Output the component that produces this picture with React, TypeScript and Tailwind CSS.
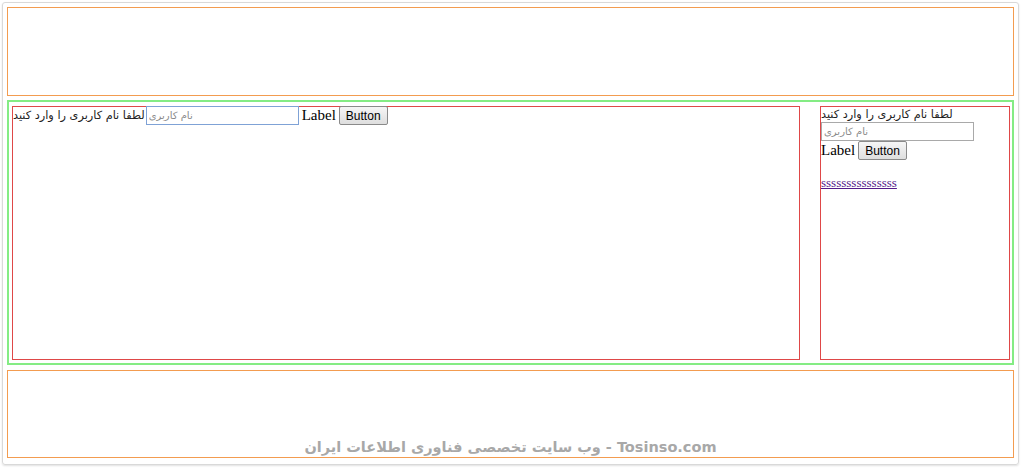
const persian = 'لطفا نام کاربری را وارد کنید';

function WinButton() {
  return (
    <button className="h-[19px] rounded-[2px] border border-[#8a8a8a] bg-gradient-to-b from-[#f6f6f6] to-[#dedede] px-[6px] font-['Liberation_Sans',sans-serif] text-[12px] leading-none text-black">
      Button
    </button>
  );
}

function UserInput({ focused }: { focused?: boolean }) {
  return (
    <input
      placeholder="نام کاربری"
      dir="rtl"
      className={`block h-[19px] w-[153px] border bg-white px-[2px] text-left font-['DejaVu_Sans',sans-serif] text-[10px] text-black placeholder:text-[#8a8a8a] outline-none ${
        focused ? 'border-[#7fa2d6]' : 'border-[#a9a9a9]'
      }`}
    />
  );
}

export default function App() {
  return (
    <div className="h-[468px] w-[1024px] overflow-hidden bg-white p-[2px] font-['Liberation_Serif',serif]">
      <div className="flex h-[463px] w-[1017px] flex-col rounded-[3px] border border-[#d9d9d9] px-[4px] pt-[4px] shadow-[0_1px_2px_rgba(0,0,0,0.12)]">
        <div className="h-[89px] border border-[#f39c50]" />

        <div className="mt-[4px] flex h-[265px] gap-[20px] border-2 border-[#84ec84] pl-[3px] pr-[2px] pt-[4px]">
          <div className="h-[254px] w-[788px] border border-[#df4848]">
            <div className="-mt-px flex h-[19px] items-center">
              <span className="font-['DejaVu_Sans',sans-serif] text-[11.3px] leading-[19px] text-[#222]">{persian}</span>
              <div className="ml-[1px]">
                <UserInput focused />
              </div>
              <span className="ml-[3px] text-[15px] leading-[19px]">Label</span>
              <div className="ml-[3px] flex">
                <WinButton />
              </div>
            </div>
          </div>

          <div className="h-[254px] w-[190px] border border-[#df4848]">
            <div className="h-[15px] font-['DejaVu_Sans',sans-serif] text-[11.3px] leading-[15px] text-[#222]">
              {persian}
            </div>
            <UserInput />
            <div className="flex h-[19px] items-center">
              <span className="text-[15px] leading-[19px]">Label</span>
              <div className="ml-[3px] flex">
                <WinButton />
              </div>
            </div>
            <div className="mt-[15px] text-[13px] leading-[15px]">
              <a href="#" className="text-[#551a8b] underline">
                sssssssssssssss
              </a>
            </div>
          </div>
        </div>

        <div className="mt-[5px] flex h-[88px] items-end justify-center border border-[#f39c50] pb-[1px]">
          <span dir="rtl" className="font-['DejaVu_Sans',sans-serif] text-[14.5px] font-bold leading-[18px] text-[#a8a8a8]">
            Tosinso.com - وب سایت تخصصی فناوری اطلاعات ایران
          </span>
        </div>
      </div>
    </div>
  );
}
